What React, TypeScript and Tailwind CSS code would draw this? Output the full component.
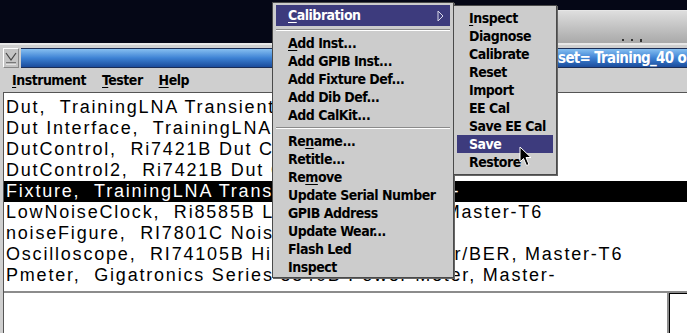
import type { ReactNode } from "react";

const menuFont = "font-['DejaVu_Sans_Condensed','Liberation_Sans_Narrow',sans-serif] font-bold";

const rows: { text: string; selected?: boolean }[] = [
  { text: "Dut,  TrainingLNA Transient Test" },
  { text: "Dut Interface,  TrainingLNA Interface" },
  { text: "DutControl,  Ri7421B Dut Control" },
  { text: "DutControl2,  Ri7421B Dut Control" },
  { text: "Fixture,  TrainingLNA Transient Board, Master-", selected: true },
  { text: "LowNoiseClock,  Ri8585B Low-Noise  Clock, Master-T6" },
  { text: "noiseFigure,  RI7801C Noise Figure" },
  { text: "Oscilloscope,  RI74105B High Sample Digitizer/BER, Master-T6" },
  { text: "Pmeter,  Gigatronics Series 8540B Power Meter, Master-" }
];

const addItems: [string, number][] = [
  ["Add Inst...", 0],
  ["Add GPIB Inst...", -1],
  ["Add Fixture Def...", -1],
  ["Add Dib Def...", -1],
  ["Add CalKit...", -1]
];

const editItems: [string, number][] = [
  ["Rename...", 2],
  ["Retitle...", -1],
  ["Remove", 2],
  ["Update Serial Number", -1],
  ["GPIB Address", -1],
  ["Update Wear...", -1],
  ["Flash Led", -1],
  ["Inspect", -1]
];

const calItems: [string, number][] = [
  ["Inspect", 0],
  ["Diagnose", -1],
  ["Calibrate", -1],
  ["Reset", -1],
  ["Import", -1],
  ["EE Cal", -1],
  ["Save EE Cal", -1],
  ["Save", -1],
  ["Restore", -1]
];

function Mnemonic({ label, at }: { label: string; at: number }): ReactNode {
  if (at < 0) return label;
  return (
    <>
      {label.slice(0, at)}
      <span className="underline decoration-1 underline-offset-2">{label[at]}</span>
      {label.slice(at + 1)}
    </>
  );
}

function Separator() {
  return <div className="my-[3px] h-[2px] border-t border-b border-t-[#8a8a8a] border-b-white" />;
}

export default function App() {
  return (
    <div className="relative flex h-[333px] w-[687px] flex-col overflow-hidden bg-[#050716]">
      {/* window behind, top right */}
      <div className="absolute left-[440px] right-0 top-[10px] h-[33px] border-t border-[#e6e6e6] bg-gradient-to-b from-[#dedede] to-[#a9a9a9]">
        <div className="absolute bottom-[1px] left-[182px] flex gap-[7px]">
          <span className="h-[2px] w-[2px] bg-[#333]" />
          <span className="h-[2px] w-[2px] bg-[#333]" />
          <span className="h-[3px] w-[2px] bg-[#333]" />
        </div>
      </div>

      <div className="h-[43px] shrink-0" />

      {/* main window */}
      <div className="relative flex min-h-0 flex-1 flex-col border-t-2 border-[#e8e8e8] bg-[#cfcfcf] pl-[3px]">
        <div className="mt-[3px] flex h-[20px] shrink-0 gap-[2px]">
          <div className="grid w-[19px] place-items-center border border-t-white border-l-white border-b-[#888] border-r-[#888] bg-[#c4c4c4]">
            <svg width="14" height="14" viewBox="0 0 14 14">
              <path d="M2 2 L7 9 L12 2" fill="none" stroke="#444" strokeWidth="1.2" />
              <path d="M2 12 H12" stroke="#444" strokeWidth="1.2" />
              <path d="M2 13 H12" stroke="#fff" strokeWidth="1" />
            </svg>
          </div>
          <div className="flex flex-1 items-center border-y border-[#1b2d55] bg-gradient-to-b from-[#86bff0] via-[#3d82d4] to-[#1c4c9c]">
            <span className={`${menuFont} ml-[520px] whitespace-nowrap text-[15px] tracking-[-0.7px] text-white`}>
              Asset= Training_40 on Master-T6
            </span>
          </div>
        </div>

        <div className={`${menuFont} flex h-[24px] shrink-0 items-center gap-[16px] pl-[9px] text-[14px] tracking-[-0.5px] text-black`}>
          <span>
            <Mnemonic label="Instrument" at={0} />
          </span>
          <span>
            <Mnemonic label="Tester" at={0} />
          </span>
          <span>
            <Mnemonic label="Help" at={0} />
          </span>
        </div>

        <div className="flex min-h-0 flex-1 flex-col border-l border-t border-[#555] bg-white">
          <div className="h-[198px] shrink-0 pt-[4px] font-['Liberation_Sans',Arial,sans-serif] text-[18px] tracking-[1.8px]">
            {rows.map((row) => (
              <div
                className={`flex h-[21px] items-center whitespace-nowrap pl-[2px] ${row.selected ? "bg-black text-white" : "text-black"}`}
                key={row.text}
              >
                {row.text.replace(/  /g, "\u00a0\u00a0")}
              </div>
            ))}
          </div>
          <div className="flex flex-1 border-t-2 border-[#8c8c8c]">
            <div className="flex-1" />
            <div className="w-[20px] border-l-2 border-[#8c8c8c]">
              <div className="h-full border-l border-t border-black" />
            </div>
          </div>
        </div>
      </div>

      {/* Instrument menu */}
      <div className={`${menuFont} absolute left-[272px] top-[2px] h-[276px] w-[182px] border border-[#4a4a4a] bg-[#cccccc] px-[3px] pt-[2px] text-[14px] tracking-[-0.5px] text-black shadow-[1px_1px_0_#666]`}>
        <div className="flex h-[21px] items-center justify-between bg-[#3d3b7d] pl-[12px] pr-[6px] text-white">
          <span>
            <Mnemonic label="Calibration" at={0} />
          </span>
          <svg width="7" height="12" viewBox="0 0 7 12">
            <path d="M1 1 L6 6 L1 11 Z" fill="none" stroke="#d8d8e8" strokeWidth="1" />
          </svg>
        </div>
        <Separator />
        {addItems.map(([label, at]) => (
          <div className="flex h-[18px] items-center pl-[12px]" key={label}>
            <span>
              <Mnemonic label={label} at={at} />
            </span>
          </div>
        ))}
        <Separator />
        {editItems.map(([label, at]) => (
          <div className="flex h-[18px] items-center pl-[12px]" key={label}>
            <span>
              <Mnemonic label={label} at={at} />
            </span>
          </div>
        ))}
      </div>

      {/* Calibration submenu */}
      <div className={`${menuFont} absolute left-[453px] top-[5px] h-[170px] w-[104px] border border-[#4a4a4a] bg-[#cccccc] px-[3px] pt-[3px] text-[14px] tracking-[-0.5px] text-black shadow-[1px_1px_0_#666]`}>
        {calItems.map(([label, at]) => (
          <div className={`flex h-[18px] items-center pl-[12px] ${label === "Save" ? "bg-[#3d3b7d] text-white" : ""}`} key={label}>
            <span>
              <Mnemonic label={label} at={at} />
            </span>
          </div>
        ))}
      </div>

      {/* pointer */}
      <svg className="absolute left-[519px] top-[146px]" width="14" height="22" viewBox="0 0 14 22">
        <path d="M1 1 L1 16 L4.5 12.5 L7.5 19.5 L10 18.5 L7 11.5 L12 11.5 Z" fill="#000" stroke="#fff" strokeWidth="1" />
      </svg>
    </div>
  );
}
